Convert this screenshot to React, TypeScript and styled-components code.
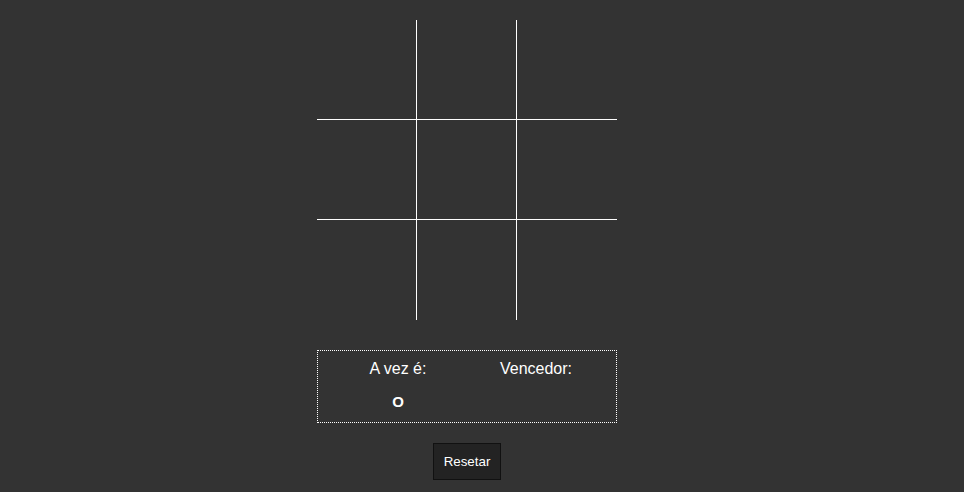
import { FC, useState } from "react";
import styled, { createGlobalStyle } from "styled-components";

type Mark = "X" | "O" | "";

const GlobalStyle = createGlobalStyle`
	html, body {
		margin: 0;
		padding: 0;
		background-color: #333333;
		overflow: hidden;
	}

	body {
		font-family: "Liberation Sans", Arial, sans-serif;
		color: #ffffff;
	}
`;

const App: FC = () => {
	const [board, setBoard] = useState<Mark[]>(Array(9).fill(""));
	const [turn, setTurn] = useState<Mark>("O");
	const [winner] = useState<string>("");

	const play = (index: number) => {
		if (board[index]) return;
		const next = [...board];
		next[index] = turn;
		setBoard(next);
		setTurn(turn === "O" ? "X" : "O");
	};

	const reset = () => {
		setBoard(Array(9).fill(""));
		setTurn("O");
	};

	return (
		<Page>
			<GlobalStyle />
			<Board>
				{board.map((mark, i) => (
					<Cell key={i} $col={i % 3} $row={Math.floor(i / 3)} onClick={() => play(i)}>
						{mark}
					</Cell>
				))}
			</Board>

			<InfoPanel>
				<InfoColumn>
					<InfoTitle>A vez é:</InfoTitle>
					<InfoValue>{turn}</InfoValue>
				</InfoColumn>
				<InfoColumn>
					<InfoTitle>Vencedor:</InfoTitle>
					<InfoValue>{winner}</InfoValue>
				</InfoColumn>
			</InfoPanel>

			<ResetBtn onClick={reset}>Resetar</ResetBtn>
		</Page>
	);
};

export default App;

const Page = styled.main`
	width: 934px;
	display: flex;
	flex-direction: column;
	align-items: center;
	padding: 20px 0 0;
`;

const Board = styled.div`
	width: 300px;
	height: 300px;
	display: grid;
	grid-template-columns: repeat(3, 100px);
	grid-template-rows: repeat(3, 100px);
`;

const Cell = styled.div<{ $col: number; $row: number }>`
	box-sizing: border-box;
	display: flex;
	align-items: center;
	justify-content: center;
	font-size: 48px;
	font-weight: 700;
	cursor: pointer;
	border-right: ${({ $col }) => ($col < 2 ? "1px solid #ffffff" : "none")};
	border-bottom: ${({ $row }) => ($row < 2 ? "1px solid #ffffff" : "none")};
`;

const InfoPanel = styled.section`
	box-sizing: border-box;
	width: 300px;
	height: 73px;
	margin: 30px 0 0;
	padding: 9px 0 0 20px;
	display: flex;
	gap: 18px;
	border: 1px dotted #ffffff;
`;

const InfoColumn = styled.div`
	width: 120px;
	display: flex;
	flex-direction: column;
	align-items: center;
	gap: 15px;
`;

const InfoTitle = styled.span`
	font-size: 16px;
	line-height: 18px;
`;

const InfoValue = styled.span`
	font-size: 15px;
	font-weight: 700;
	line-height: 17px;
	min-height: 17px;
`;

const ResetBtn = styled.button`
	margin: 20px 0 0;
	padding: 10px;
	font-family: "Liberation Sans", Arial, sans-serif;
	font-size: 13.33px;
	line-height: 15px;
	color: #ffffff;
	background-color: #232323;
	border: 1px solid #111111;
	cursor: pointer;
`;
